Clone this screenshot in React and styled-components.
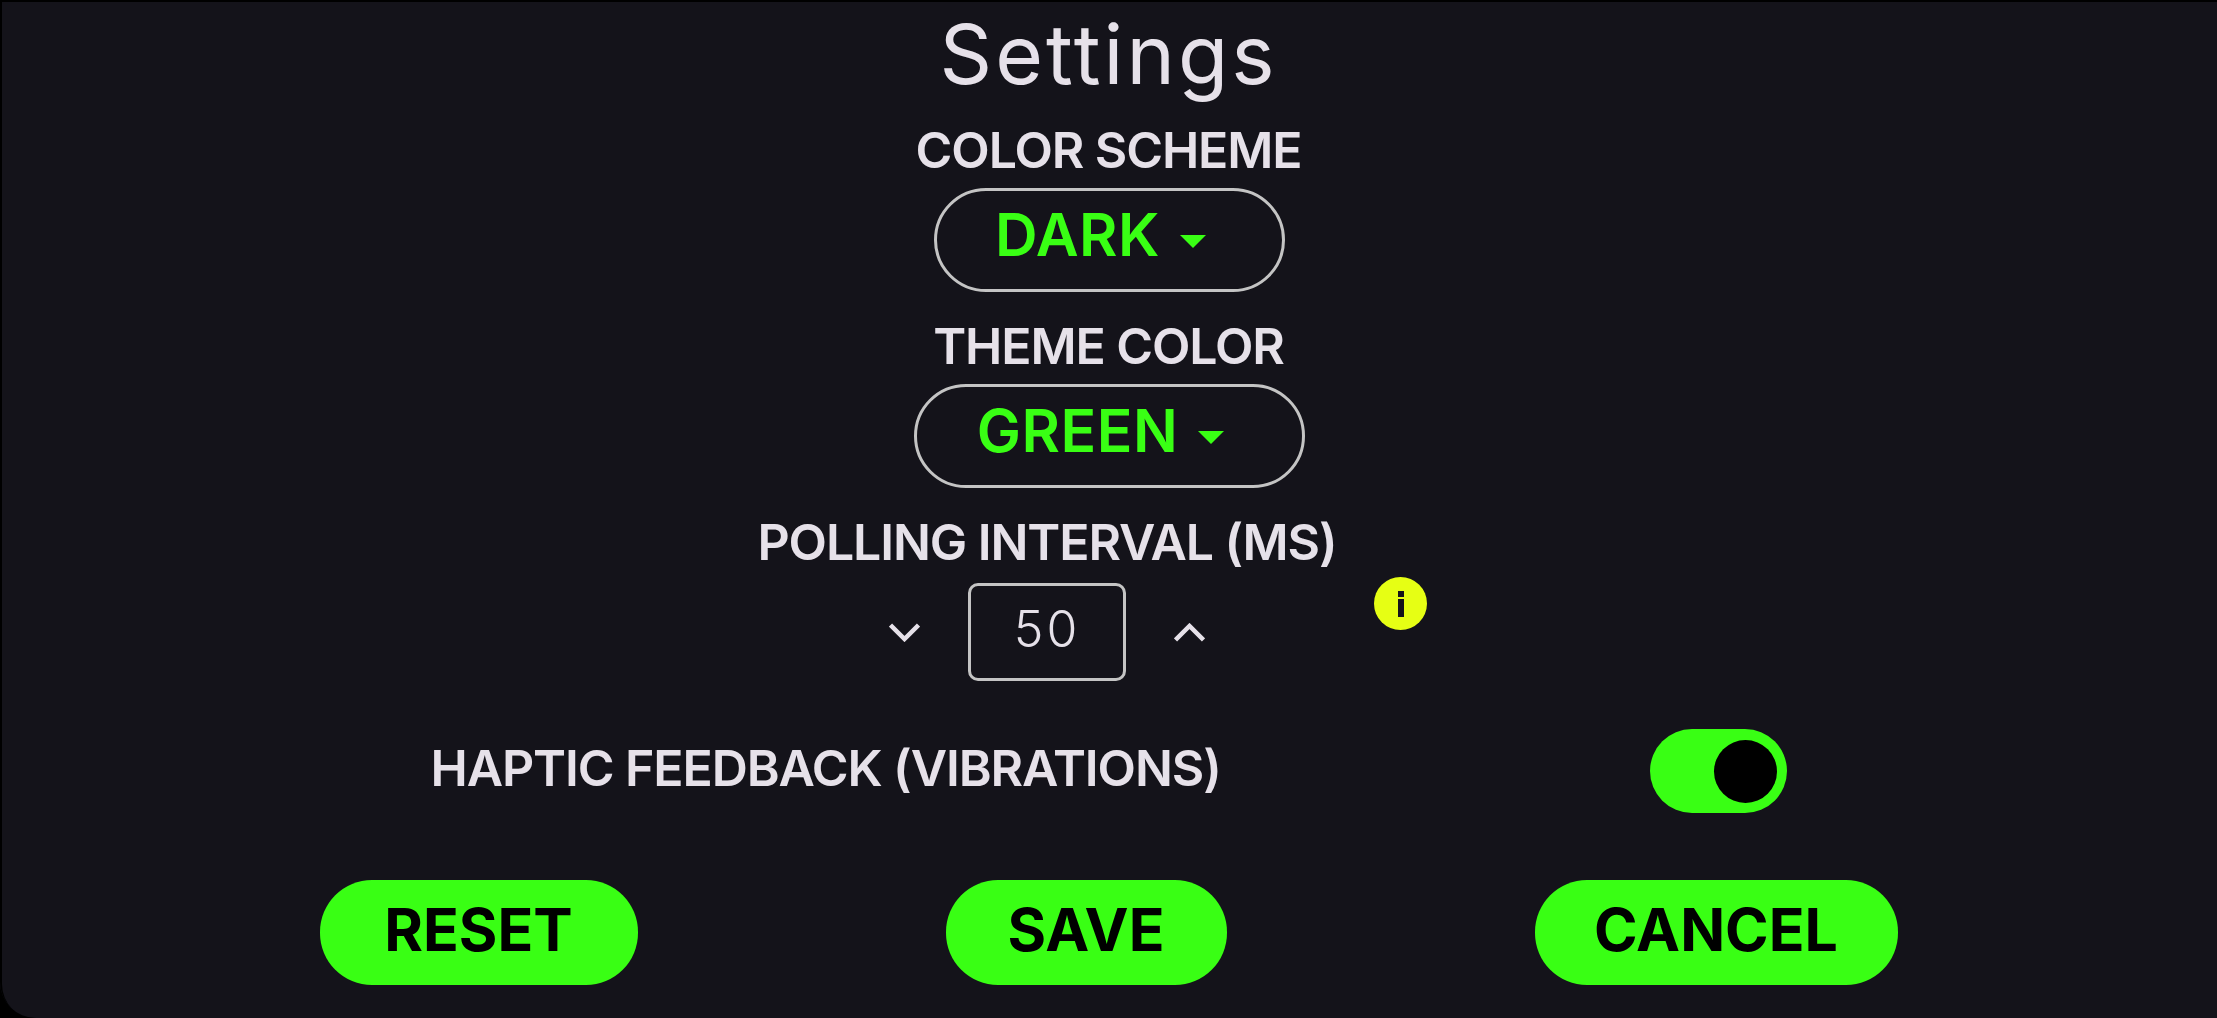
import React from 'react';
import styled, { createGlobalStyle } from 'styled-components';

const GlobalStyle = createGlobalStyle`
  html, body {
    margin: 0;
    height: 100%;
    background: #000;
  }
  * {
    box-sizing: border-box;
  }
`;

const Page = styled.main`
  display: flex;
  flex-direction: column;
  align-items: center;
  width: 2217px;
  height: 1018px;
  padding-top: 8px;
  overflow: hidden;
  background: #14131a;
  box-shadow: inset 2px 2px 0 #000;
  border-bottom-left-radius: 36px;
  color: #e6e1e9;
  font-family: Inter, 'Liberation Sans', sans-serif;
`;

const Title = styled.h1`
  margin: 2px 0 -2px;
  font-size: 82px;
  line-height: 90px;
  font-weight: 400;
  letter-spacing: 3px;
`;

const Label = styled.div`
  margin-top: ${(p) => p.$top || 24}px;
  font-size: 50px;
  line-height: 60px;
  font-weight: 600;
  letter-spacing: -1.1px;
  white-space: nowrap;
`;

const Select = styled.button`
  display: flex;
  align-items: center;
  justify-content: center;
  gap: 20px;
  width: ${(p) => p.$width}px;
  height: 104px;
  margin: 8px 0 0 2px;
  padding: 0 18px 12px 0;
  background: none;
  border: 3px solid #c4c4c4;
  border-radius: 52px;
  color: #39ff14;
  font: inherit;
  font-size: 59px;
  font-weight: 600;
  letter-spacing: 0.5px;
`;

const Caret = styled.span`
  width: 0;
  height: 0;
  margin-top: 15px;
  border-left: 13px solid transparent;
  border-right: 13px solid transparent;
  border-top: 13px solid #39ff14;
`;

const PollingRow = styled.section`
  display: flex;
  align-items: flex-start;
  margin-right: 32px;
`;

const PollingColumn = styled.div`
  display: flex;
  flex-direction: column;
  align-items: center;
  width: 577px;
`;

const Stepper = styled.div`
  display: flex;
  align-items: center;
  gap: 48px;
  margin-top: 11px;
`;

const StepButton = styled.button`
  display: flex;
  padding: 0;
  background: none;
  border: 0;
  color: #e6e1e9;
`;

const StepValue = styled.div`
  width: 158px;
  height: 98px;
  border: 3px solid #c4c4c4;
  border-radius: 10px;
  text-align: center;
  font-size: 50px;
  line-height: 86px;
  font-weight: 300;
  letter-spacing: 3px;
`;

const InfoBadge = styled.svg`
  width: 53px;
  height: 53px;
  margin: 89px 0 0 38px;
  flex-shrink: 0;
`;

const HapticRow = styled.section`
  display: flex;
  align-items: center;
  justify-content: space-between;
  width: 1356px;
  margin-top: 48px;
`;

const HapticLabel = styled.div`
  margin-top: -6px;
  font-size: 50px;
  line-height: 60px;
  font-weight: 600;
  letter-spacing: -1.1px;
  white-space: nowrap;
`;

const Toggle = styled.div`
  display: flex;
  align-items: center;
  justify-content: flex-end;
  width: 137px;
  height: 84px;
  padding-right: 10px;
  background: #39ff14;
  border-radius: 42px;
`;

const Knob = styled.span`
  width: 63px;
  height: 63px;
  background: #000;
  border-radius: 50%;
`;

const Actions = styled.footer`
  display: flex;
  justify-content: space-between;
  width: 1578px;
  margin-top: 67px;
`;

const ActionButton = styled.button`
  width: ${(p) => p.$width}px;
  height: 105px;
  padding: 0 0 6px;
  background: #39ff14;
  border: 0;
  border-radius: 52px;
  color: #000;
  font: inherit;
  font-size: 59px;
  font-weight: 700;
`;

const ChevronDown = () => (
  <svg width="31" height="19" viewBox="0 0 31 19" fill="none" stroke="currentColor" strokeWidth="4.5">
    <path d="M1.5 2 L15.5 16 L29.5 2" />
  </svg>
);

const ChevronUp = () => (
  <svg width="31" height="19" viewBox="0 0 31 19" fill="none" stroke="currentColor" strokeWidth="4.5">
    <path d="M1.5 17 L15.5 3 L29.5 17" />
  </svg>
);

export default function App() {
  return (
    <>
      <GlobalStyle />
      <Page>
        <Title>Settings</Title>

        <Label $top={22}>COLOR SCHEME</Label>
        <Select $width={351}>
          DARK
          <Caret />
        </Select>

        <Label>THEME COLOR</Label>
        <Select $width={391}>
          GREEN
          <Caret />
        </Select>

        <PollingRow>
          <PollingColumn>
            <Label>POLLING INTERVAL (MS)</Label>
            <Stepper>
              <StepButton>
                <ChevronDown />
              </StepButton>
              <StepValue>50</StepValue>
              <StepButton>
                <ChevronUp />
              </StepButton>
            </Stepper>
          </PollingColumn>
          <InfoBadge viewBox="0 0 53 53">
            <circle cx="26.5" cy="26.5" r="26.5" fill="#e6ff14" />
            <rect x="24" y="14" width="6" height="6" fill="#14131a" />
            <rect x="24" y="22" width="6" height="18" fill="#14131a" />
          </InfoBadge>
        </PollingRow>

        <HapticRow>
          <HapticLabel>HAPTIC FEEDBACK (VIBRATIONS)</HapticLabel>
          <Toggle>
            <Knob />
          </Toggle>
        </HapticRow>

        <Actions>
          <ActionButton $width={318}>RESET</ActionButton>
          <ActionButton $width={281}>SAVE</ActionButton>
          <ActionButton $width={363}>CANCEL</ActionButton>
        </Actions>
      </Page>
    </>
  );
}
